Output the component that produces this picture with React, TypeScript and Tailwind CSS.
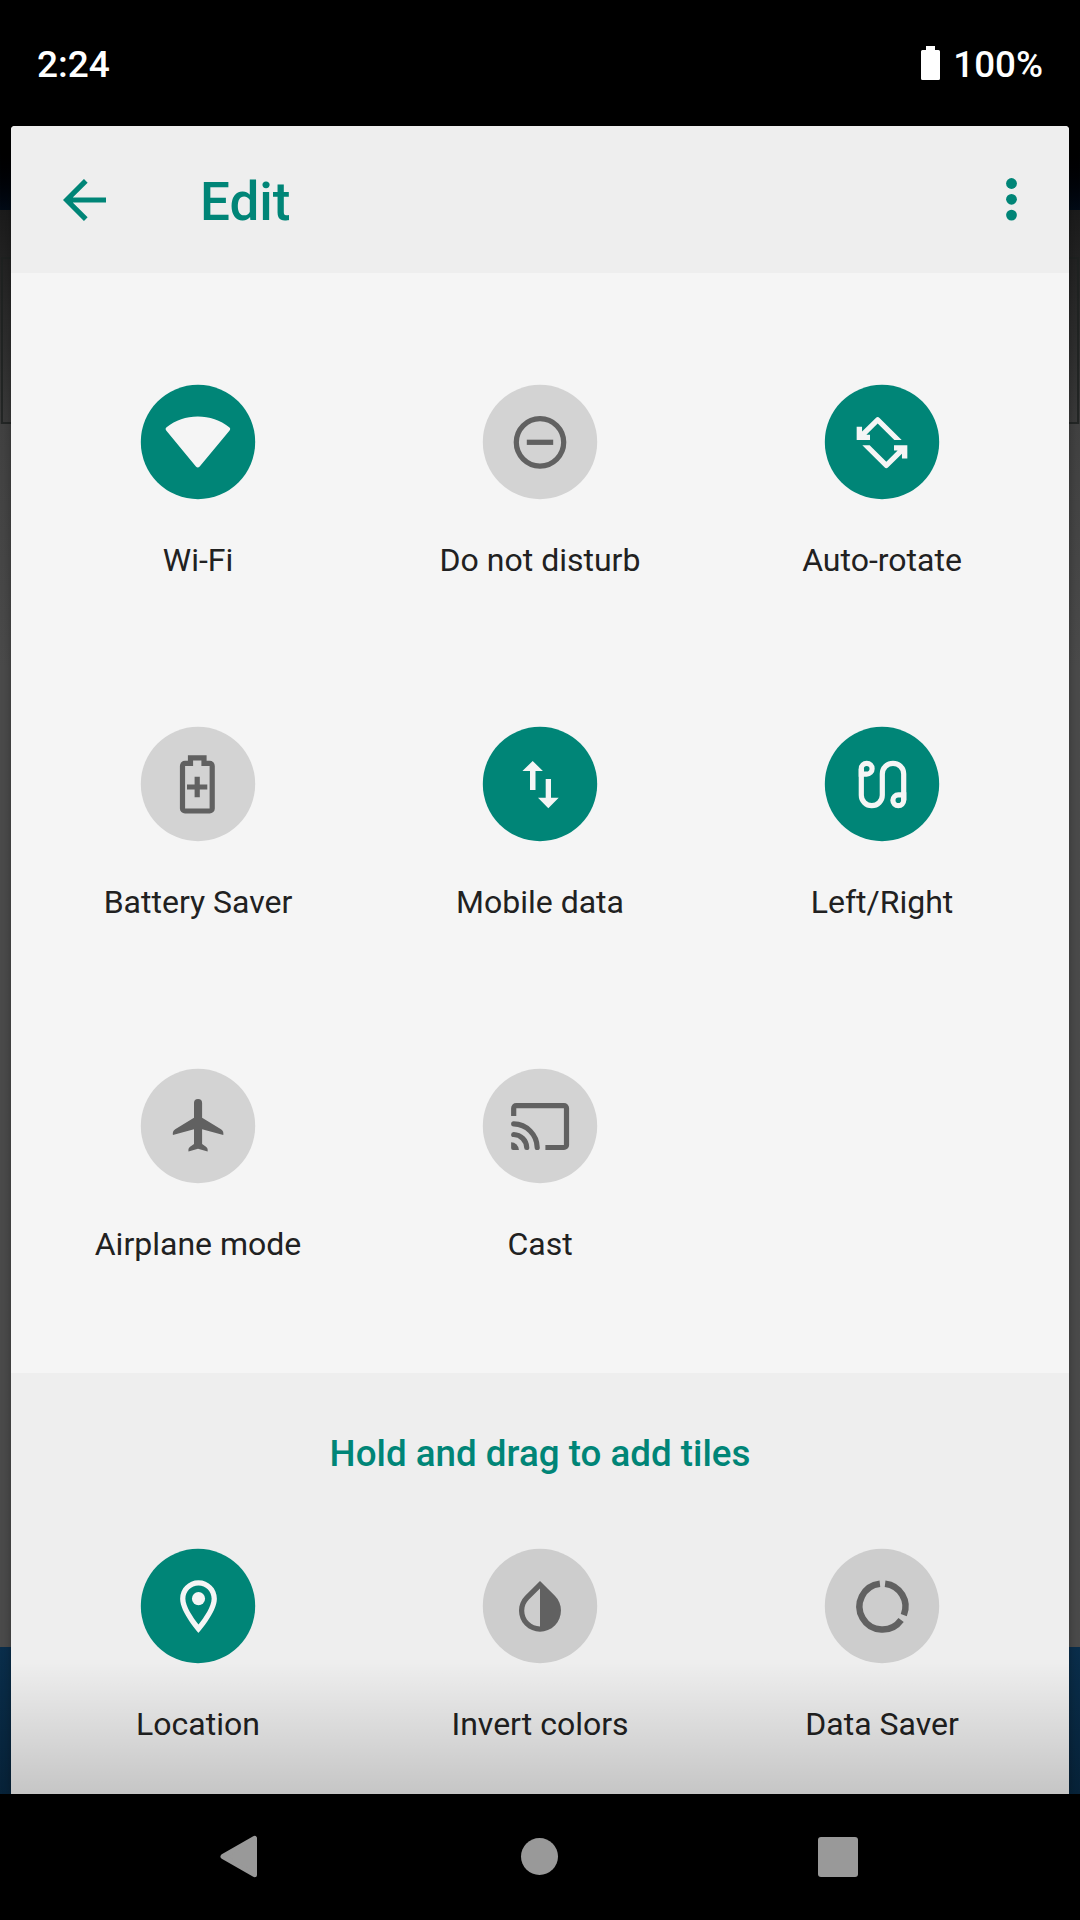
import type { ReactNode } from "react";

type Tile = { label: string; on?: boolean; icon: ReactNode };

const WifiIcon = (
  <path
    d="M25.200 45.400c-.9-1.300-.8-2.200.4-3.100C34.700 35 45 31.500 56.800 31.500S79.300 35 88.200 42.300c1.200.9 1.300 1.800.4 3.100L58.700 81.400q-1.900 2-3.800 0z"
    fill="currentColor"
  />
);

const DndIcon = (
  <g fill="none" stroke="currentColor" strokeWidth="5.25">
    <circle cx="57" cy="57.3" r="23.700" />
    <path d="M43.800 57.300h26.400" />
  </g>
);

const rotateHalf =
  "M9.650 2.700Q10.350 2.050 11.050 2.700L19.500 11.100H16.700L10.350 4.850 6.050 9.100H7.430V11.100H2.350V6.050H4.400V7.900z";

const RotateIcon = (
  <g transform="translate(25.5 25.800) scale(2.625)" fill="currentColor">
    <path d={rotateHalf} />
    <path d={rotateHalf} transform="rotate(180 12 12.120)" />
  </g>
);

const BatterySaverIcon = (
  <g fill="none" stroke="currentColor" strokeWidth="5.200">
    <path
      d="M49.500 36.400V30.800H63V36.400H68.700a2.500 2.500 0 0 1 2.500 2.500V81.500a2.500 2.500 0 0 1-2.500 2.500H44a2.500 2.500 0 0 1-2.500-2.500V38.900a2.500 2.500 0 0 1 2.500-2.500z"
      strokeLinejoin="miter"
    />
    <path d="M46 60H66.300M56.200 49.700V70.300" />
  </g>
);

const MobileDataIcon = (
  <path
    d="M49.700 34L59.900 44H52.500V63H47V44H39.400zM62.700 52H68V70.700H75.700L65.300 81.300 55 70.700H62.700z"
    fill="currentColor"
  />
);

const LeftRightIcon = (
  <g fill="none" stroke="currentColor" strokeWidth="5.200">
    <path d="M36.300 41.700V68.200a10.500 10.500 0 0 0 21 0V47a10.700 10.700 0 0 1 21.400 0V73.300" />
    <path d="M36.300 47.100V41.700a5.400 5.400 0 1 1 5.400 5.400z" />
    <path d="M78.700 67.900V73.300a5.400 5.400 0 1 1-5.400-5.400z" />
  </g>
);

const AirplaneIcon = (
  <path
    d="M53 34a4.050 4 0 0 1 8.100 0V48.700L80 60.300C82.300 61.900 82.600 63.500 82.300 66L61.100 60.300V75L65 77.700C66.600 79 66.900 80.400 66.600 82.500L57 79.800 47.500 82.500C47.200 80.400 47.500 79 49.100 77.700L53 75V60.300L31.900 66C31.600 63.500 31.900 61.900 34.200 60.300L53 48.700z"
    fill="currentColor"
  />
);

const CastIcon = (
  <g fill="none" stroke="currentColor" strokeWidth="5.200">
    <path d="M30.700 47V39.200a2.500 2.500 0 0 1 2.500-2.500H81a2.500 2.500 0 0 1 2.500 2.500V76a2.500 2.500 0 0 1-2.500 2.500H62.400" />
    <path d="M30.700 54.900A24 24 0 0 1 54.200 78.500M30.700 65.500A13.500 13.500 0 0 1 43.700 78.500" strokeLinecap="round" />
    <path d="M28.100 73.300A8 8 0 0 1 35.900 81H30.100a2 2 0 0 1-2-2z" fill="currentColor" stroke="none" />
  </g>
);

const LocationIcon = (
  <g transform="translate(26 26) scale(2.625)" fill="currentColor">
    <path d="M12 2C8.130 2 5 5.130 5 9c0 5.250 7 13 7 13s7-7.750 7-13c0-3.870-3.130-7-7-7zM7 9c0-2.760 2.240-5 5-5s5 2.240 5 5c0 2.880-2.880 7.190-5 9.880C9.920 16.210 7 11.850 7 9z" />
    <circle cx="12" cy="9" r="2.500" />
  </g>
);

const InvertIcon = (
  <g transform="translate(25.500 26) scale(2.625)" fill="currentColor">
    <path d="M17.660 7.930L12 2.270 6.340 7.930c-3.120 3.120-3.120 8.190 0 11.310C7.900 20.800 9.950 21.580 12 21.580c2.050 0 4.100-.78 5.660-2.340 3.120-3.120 3.120-8.190 0-11.310zM12 19.590c-1.600 0-3.110-.62-4.240-1.760C6.620 16.690 6 15.190 6 13.590s.62-3.110 1.760-4.240L12 5.100v14.490z" />
  </g>
);

const DataSaverIcon = (
  <path
    d="M60.100 34.650A23 23 0 0 1 78.800 66.100M76.100 71A23 23 0 1 1 54.900 34.650"
    fill="none"
    stroke="currentColor"
    strokeWidth="6.500"
  />
);

const activeTiles: Tile[] = [
  { label: "Wi-Fi", on: true, icon: WifiIcon },
  { label: "Do not disturb", icon: DndIcon },
  { label: "Auto-rotate", on: true, icon: RotateIcon },
  { label: "Battery Saver", icon: BatterySaverIcon },
  { label: "Mobile data", on: true, icon: MobileDataIcon },
  { label: "Left/Right", on: true, icon: LeftRightIcon },
  { label: "Airplane mode", icon: AirplaneIcon },
  { label: "Cast", icon: CastIcon },
];

const extraTiles: Tile[] = [
  { label: "Location", on: true, icon: LocationIcon },
  { label: "Invert colors", icon: InvertIcon },
  { label: "Data Saver", icon: DataSaverIcon },
];

function TileView({ tile, offColor }: { tile: Tile; offColor: string }) {
  return (
    <div className="flex h-[342px] flex-col items-center">
      <svg
        width="114"
        height="114"
        viewBox="0 0 114 114"
        className={tile.on ? "shrink-0 overflow-visible text-[#f5f5f5]" : "shrink-0 overflow-visible text-[#616161]"}
      >
        <circle cx="57" cy="57" r="57.200" className={tile.on ? "fill-[#008577]" : offColor} />
        {tile.icon}
      </svg>
      <span className="mt-[43px] text-[32px] leading-[37px] whitespace-nowrap text-[#212121]">{tile.label}</span>
    </div>
  );
}

function SideStrip({ frame }: { frame: string }) {
  return (
    <div className="flex w-[11px] shrink-0 flex-col">
      <div className="h-[84px] bg-linear-to-b from-black to-[#020b16]" />
      <div className="h-[214px] bg-linear-to-b from-[#1b1b1b] to-[#3a3a3a] pt-[47px]">
        <div className={frame} />
      </div>
      <div className="h-[1223px] bg-linear-to-b from-[#414141] via-[#4a4a4a] via-20% to-[#4a4a4a]" />
      <div className="grow bg-linear-to-b from-[#0a2e4b] to-[#072238]" />
    </div>
  );
}

export default function App() {
  return (
    <div className="flex h-[1920px] w-[1080px] flex-col overflow-hidden bg-black font-[Roboto,sans-serif]">
      <div className="flex h-[126px] shrink-0 items-center justify-between px-[37px] text-[36.75px] font-medium text-white">
        <span className="mt-[2px] text-[37px] leading-[43px]">2:24</span>
        <div className="flex items-center gap-[13px]">
          <svg width="19" height="34" viewBox="0 0 19 34" fill="currentColor">
            <path d="M5 0h9v4h3.500A1.500 1.500 0 0 1 19 5.500v27a1.500 1.500 0 0 1-1.500 1.500h-16A1.500 1.500 0 0 1 0 32.500v-27A1.500 1.500 0 0 1 1.500 4H5z" />
          </svg>
          <span className="mt-[2px] leading-[43px]">100%</span>
        </div>
      </div>

      <div className="flex h-[1668px] shrink-0">
        <SideStrip frame="ml-px h-[167px] border-2 border-r-0 border-[#1e2221]/80" />
        <main className="relative flex w-[1058px] flex-col overflow-hidden rounded-t-[4px] bg-[#f5f5f5] shadow-[0_0_10px_rgba(0,0,0,0.3)]">
          <header className="flex h-[147px] shrink-0 items-center bg-[#eeeeee] pr-[52px] pl-[52px] text-[#008577]">
            <svg width="43" height="42" viewBox="0 0 43 42" fill="none" stroke="currentColor" strokeWidth="5.200">
              <path d="M43 21H5M22.800 1.800L3.600 21L22.800 40.200" />
            </svg>
            <h1 className="mt-[5px] ml-[94px] grow text-[53px] leading-[62px] font-medium">Edit</h1>
            <svg width="11" height="43" viewBox="0 0 11 43" fill="currentColor">
              <circle cx="5.500" cy="5.500" r="5.400" />
              <circle cx="5.500" cy="21.300" r="5.400" />
              <circle cx="5.500" cy="37.100" r="5.400" />
            </svg>
          </header>

          <section className="grid h-[1100px] shrink-0 grid-cols-3 content-start px-4 pt-[112px]">
            {activeTiles.map((tile) => (
              <TileView key={tile.label} tile={tile} offColor="fill-[#d3d3d3]" />
            ))}
          </section>

          <section className="grow bg-[#eeeeee]">
            <h2 className="pt-[59px] text-center text-[36.75px] leading-[43px] font-medium text-[#008577]">
              Hold and drag to add tiles
            </h2>
            <div className="grid grid-cols-3 px-4 pt-[74px]">
              {extraTiles.map((tile) => (
                <TileView key={tile.label} tile={tile} offColor="fill-[#cdcdcd]" />
              ))}
            </div>
          </section>
          <div className="absolute inset-x-0 bottom-0 h-[132px] bg-linear-to-b from-transparent to-black/17" />
        </main>
        <SideStrip frame="mr-px h-[167px] border-2 border-l-0 border-[#1e2221]/80" />
      </div>

      <nav className="flex grow items-start pt-[41px] pl-[220px] text-[#999999]">
        <svg width="37" height="43" viewBox="0 0 37 43" fill="currentColor" stroke="currentColor" strokeWidth="5" strokeLinejoin="round">
          <path d="M34.500 3.300V39.700L3 21.500z" />
        </svg>
        <div className="mt-[3px] ml-[264px] size-[37px] rounded-full bg-[#999999]" />
        <div className="mt-[2px] ml-[260px] size-[40px] rounded-[3px] bg-[#999999]" />
      </nav>
    </div>
  );
}
